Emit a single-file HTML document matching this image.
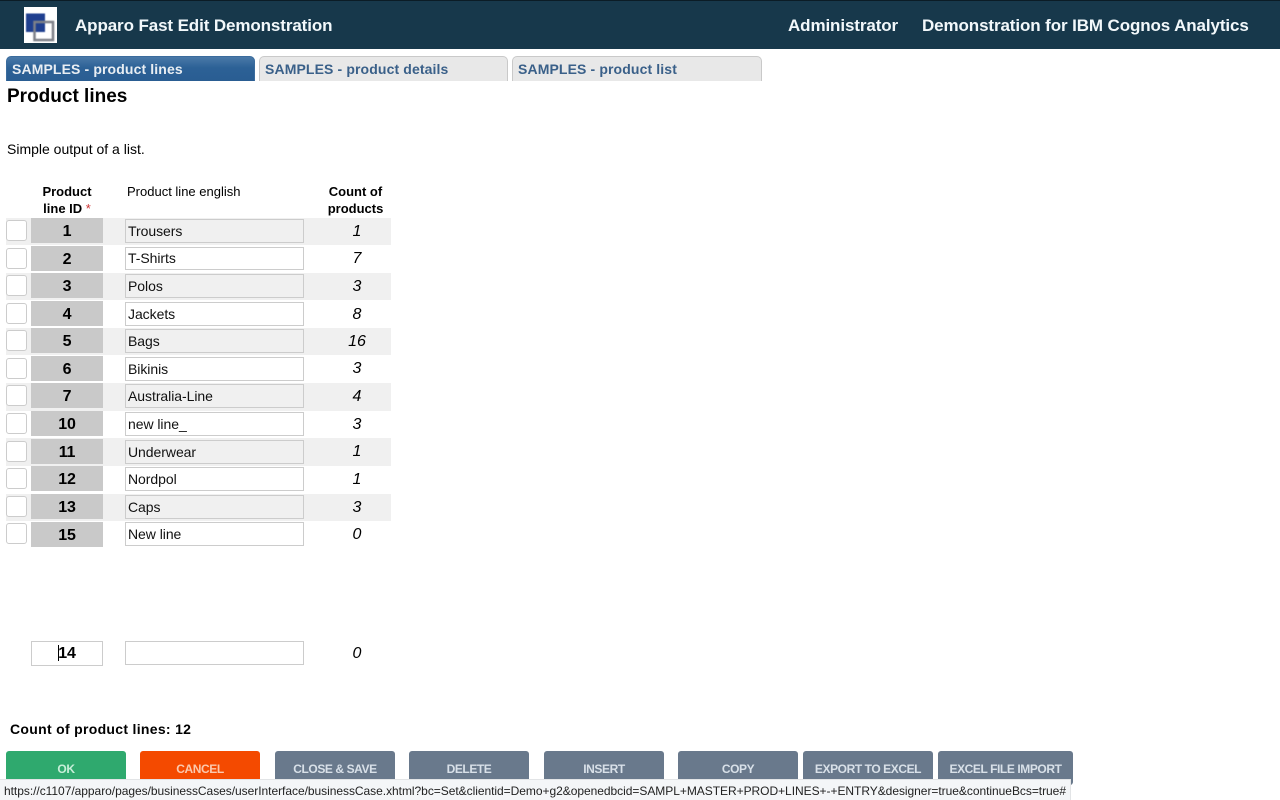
<!DOCTYPE html>
<html><head><meta charset="utf-8"><title>Apparo Fast Edit Demonstration</title>
<style>
html,body{margin:0;padding:0;background:#fff}
body{width:1280px;height:800px;overflow:hidden;position:relative;font-family:"Liberation Sans",sans-serif;color:#000}
div{position:absolute;box-sizing:border-box;white-space:nowrap}
.hd{top:0;left:0;width:1280px;height:49px;background:#17384b;border-top:1px solid #0b1c26}
.ht{top:16px;font-size:17px;font-weight:bold;color:#f2f8fb;line-height:20px;letter-spacing:-.11px}
.tab{top:56px;height:25px;border:1px solid #c9c9c9;border-bottom:0;border-radius:5px 5px 0 0;background:#e8e8e8;color:#3a6089;font-weight:bold;font-size:14px;line-height:25px;padding-left:5px;letter-spacing:.12px}
.tab.a{background:linear-gradient(#4a79a8,#2c6196 45%,#2a5d92);border-color:#3b6c9d;color:#e9eef3}
.th{font-size:13px;line-height:17px;text-align:center}
.st{left:6px;width:385px;height:27.5px;background:#f0f0f0}
.cb{left:6px;width:21px;height:21px;background:#fff;border:1px solid #ccc;border-radius:3px}
.id{left:31px;width:72px;height:25px;background:#c9c9c9;text-align:center;font-weight:bold;font-size:16px;line-height:27px;letter-spacing:-.2px}
.in{left:125px;width:179px;height:24px;border:1px solid #ccc;background:#fff;font-size:14px;line-height:23px;padding-left:2px;color:#111;letter-spacing:-.05px}
.in.g{background:#f0f0f0}
.ct{left:323px;width:68px;text-align:center;font-style:italic;font-size:16px;line-height:28px;margin-top:1px}
.b{top:751px;height:34px;border-radius:3px;background:#69798c;color:#d8e0e8;font-weight:bold;font-size:12px;text-align:center;padding-top:10px;line-height:16px;letter-spacing:-.42px}
</style></head><body>
<div class="hd"></div>
<div style="left:24px;top:7px;width:33px;height:36px;background:#fff"></div>
<svg style="position:absolute;left:24px;top:7px" width="33" height="36"><g style="filter:blur(.6px)"><rect x="2" y="6.5" width="19" height="18.5" fill="#1f3f8f"/><rect x="10.5" y="15" width="18.5" height="18" fill="none" stroke="#7d8088" stroke-width="2.5"/></g></svg>
<div class="ht" style="left:75px">Apparo Fast Edit Demonstration</div>
<div class="ht" style="left:788px">Administrator</div>
<div class="ht" style="left:922px">Demonstration for IBM Cognos Analytics</div>

<div class="tab a" style="left:6px;width:249px">SAMPLES - product lines</div>
<div class="tab" style="left:259px;width:249px">SAMPLES - product details</div>
<div class="tab" style="left:512px;width:250px">SAMPLES - product list</div>

<div style="left:7px;top:86px;font-size:19px;font-weight:bold;line-height:22px">Product lines</div>
<div style="left:7px;top:141px;font-size:14px;line-height:16px">Simple output of a list.</div>

<div class="th" style="left:31px;width:72px;top:183px;font-weight:bold">Product<br>line ID <span style="color:#c33;font-weight:normal">*</span></div>
<div class="th" style="left:127px;top:183px">Product line english</div>
<div class="th" style="left:323.5px;width:64px;top:183px;font-weight:bold">Count of<br>products</div>

<div class="st" style="top:217.5px"></div><div class="st" style="top:272.5px"></div><div class="st" style="top:327.5px"></div><div class="st" style="top:383px"></div><div class="st" style="top:438px"></div><div class="st" style="top:493.5px"></div>

<div class="cb" style="top:220px"></div><div class="id" style="top:218px">1</div><div class="in g" style="top:219px">Trousers</div><div class="ct" style="top:217px">1</div>
<div class="cb" style="top:248px"></div><div class="id" style="top:246px">2</div><div class="in" style="top:247px;height:23px;line-height:21px">T-Shirts</div><div class="ct" style="top:244px">7</div>
<div class="cb" style="top:275px"></div><div class="id" style="top:273px">3</div><div class="in g" style="top:274px">Polos</div><div class="ct" style="top:272px">3</div>
<div class="cb" style="top:303px"></div><div class="id" style="top:301px">4</div><div class="in" style="top:302px">Jackets</div><div class="ct" style="top:300px">8</div>
<div class="cb" style="top:330px"></div><div class="id" style="top:328px">5</div><div class="in g" style="top:329px">Bags</div><div class="ct" style="top:327px">16</div>
<div class="cb" style="top:358px"></div><div class="id" style="top:356px">6</div><div class="in" style="top:357px">Bikinis</div><div class="ct" style="top:354px">3</div>
<div class="cb" style="top:385px"></div><div class="id" style="top:383px">7</div><div class="in g" style="top:384px">Australia-Line</div><div class="ct" style="top:382px">4</div>
<div class="cb" style="top:413px"></div><div class="id" style="top:411px">10</div><div class="in" style="top:412px">new line_</div><div class="ct" style="top:410px">3</div>
<div class="cb" style="top:441px"></div><div class="id" style="top:439px">11</div><div class="in g" style="top:440px">Underwear</div><div class="ct" style="top:437px">1</div>
<div class="cb" style="top:468px"></div><div class="id" style="top:466px">12</div><div class="in" style="top:467px">Nordpol</div><div class="ct" style="top:465px">1</div>
<div class="cb" style="top:496px"></div><div class="id" style="top:494px">13</div><div class="in g" style="top:495px">Caps</div><div class="ct" style="top:493px">3</div>
<div class="cb" style="top:523px"></div><div class="id" style="top:522px">15</div><div class="in" style="top:522px">New line</div><div class="ct" style="top:520px">0</div>

<div class="id" style="top:641px;background:#fff;border:1px solid #ccc;line-height:24px">14</div>
<div style="left:58px;top:645px;width:1px;height:16px;background:#000"></div>
<div class="in" style="top:641px"></div>
<div class="ct" style="top:639px">0</div>

<div style="left:10px;top:721px;font-size:14px;font-weight:bold;line-height:16px;letter-spacing:.3px">Count of product lines: 12</div>

<div class="b" style="left:6px;width:120px;background:#2fa96e;color:#c8efd9">OK</div>
<div class="b" style="left:140px;width:120px;background:#f44a00;color:#fbc9ae">CANCEL</div>
<div class="b" style="left:275px;width:120px">CLOSE &amp; SAVE</div>
<div class="b" style="left:409px;width:120px">DELETE</div>
<div class="b" style="left:544px;width:120px">INSERT</div>
<div class="b" style="left:678px;width:120px">COPY</div>
<div class="b" style="left:803px;width:130px">EXPORT TO EXCEL</div>
<div class="b" style="left:938px;width:135px">EXCEL FILE IMPORT</div>

<div style="left:0;top:779px;width:1071px;height:21px;background:#f4f6f8;border-top:1px solid #e2e4e6;border-right:1px solid #e2e4e6"></div>
<svg style="position:absolute;left:0;top:779px" width="1071" height="21"><text x="4" y="16" font-family="Liberation Sans, sans-serif" font-size="12" fill="#222" textLength="1062" lengthAdjust="spacing">https://c1107/apparo/pages/businessCases/userInterface/businessCase.xhtml?bc=Set&amp;clientid=Demo+g2&amp;openedbcid=SAMPL+MASTER+PROD+LINES+-+ENTRY&amp;designer=true&amp;continueBcs=true#</text></svg>
</body></html>
